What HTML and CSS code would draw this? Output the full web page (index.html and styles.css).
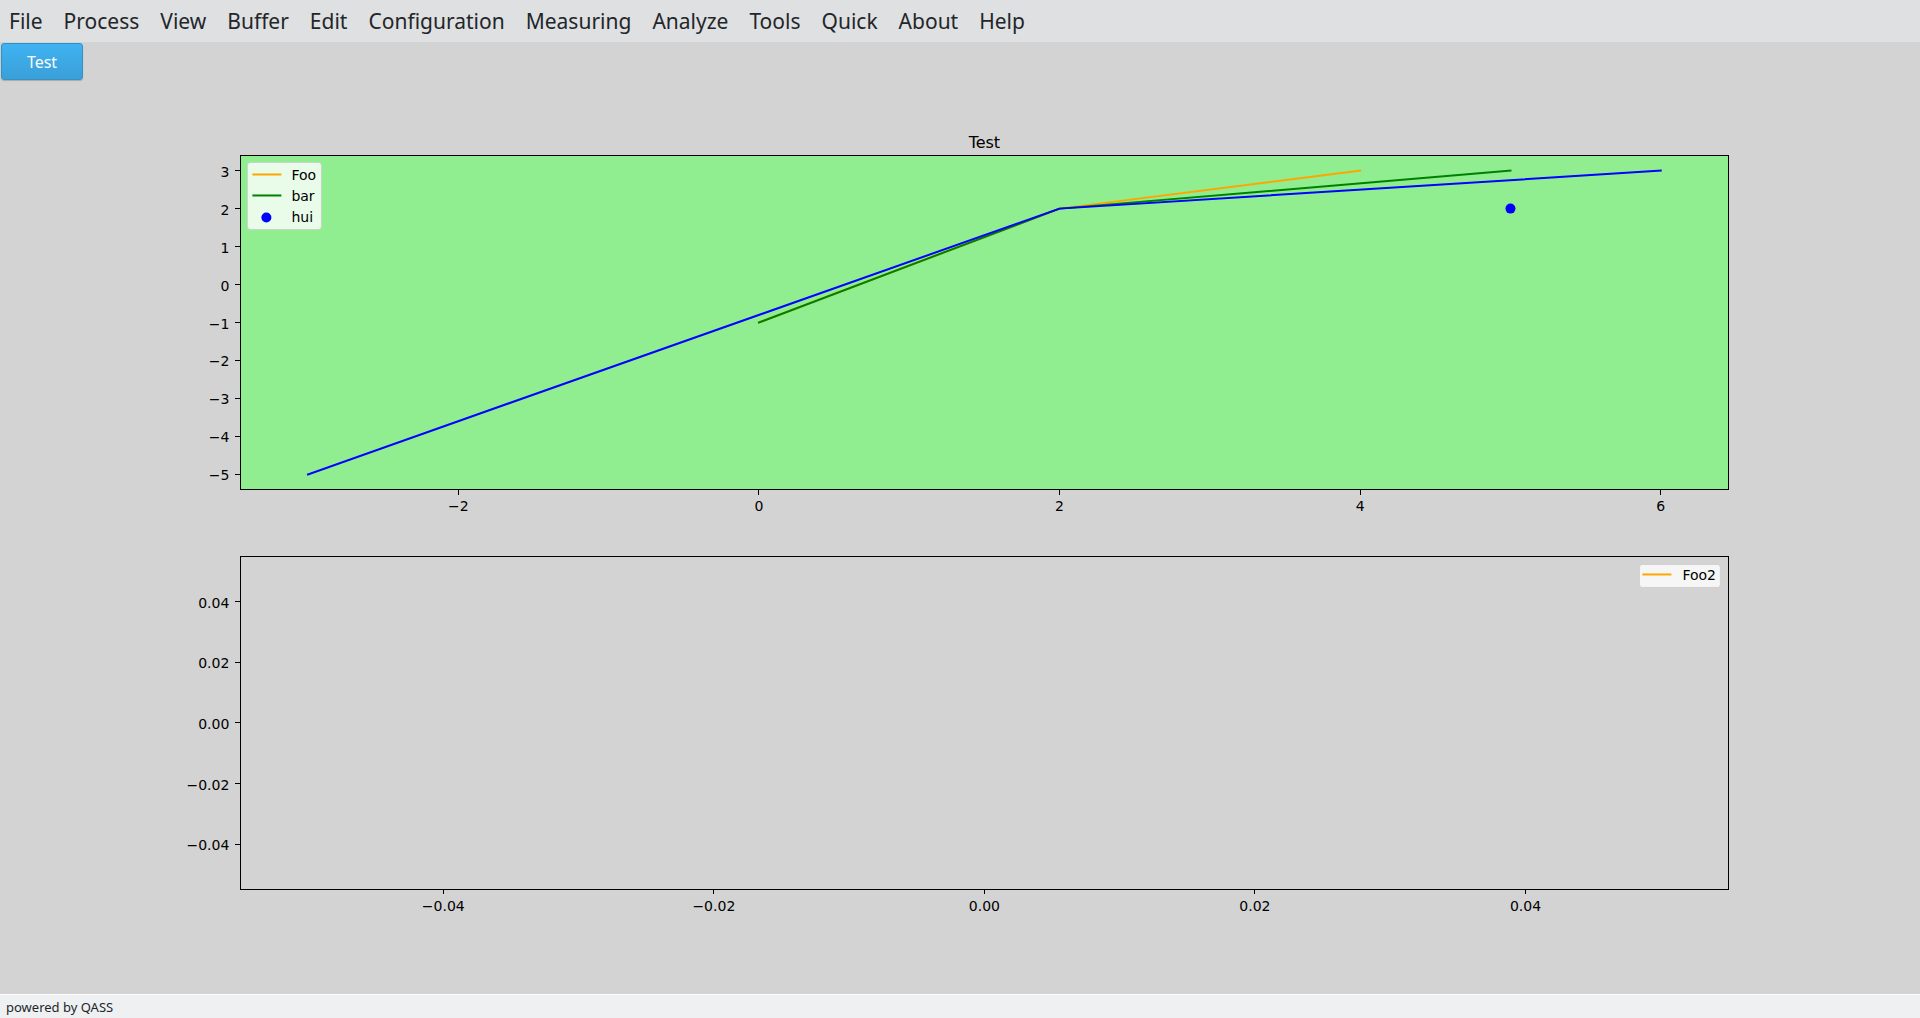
FILE: index.html
```html
<!DOCTYPE html>
<html lang="en">
<head>
<meta charset="utf-8">
<title>Test</title>
<link rel="stylesheet" href="styles.css">
</head>
<body>
<nav class="menubar">
  <button type="button">File</button>
  <button type="button">Process</button>
  <button type="button">View</button>
  <button type="button">Buffer</button>
  <button type="button">Edit</button>
  <button type="button">Configuration</button>
  <button type="button">Measuring</button>
  <button type="button">Analyze</button>
  <button type="button">Tools</button>
  <button type="button">Quick</button>
  <button type="button">About</button>
  <button type="button">Help</button>
</nav>
<main class="canvas">
  <svg class="figure" role="img" aria-label="Test plots">
    <!-- upper axes -->
    <svg class="axes" x="12.52%" y="11.92%" width="77.5%" height="35.09%">
      <rect class="frame frame-green" width="100%" height="100%"/>
      <svg x="50%"><text class="title" y="-7">Test</text></svg>

      <svg width="100%" height="100%" viewBox="-3.45 -3.4 9.9 8.8" preserveAspectRatio="none">
        <polyline class="series orange" points="0,1 2,-2 4,-3"/>
        <polyline class="series green" points="0,1 2,-2 5,-3"/>
        <polyline class="series blue" points="-3,5 2,-2 6,-3"/>
      </svg>
      <circle class="dot" cx="85.354%" cy="15.909%" r="5"/>

      <svg class="tick" x="14.646%" y="100%"><path d="M0 0V5"/><text class="xlabel" y="21">−2</text></svg>
      <svg class="tick" x="34.848%" y="100%"><path d="M0 0V5"/><text class="xlabel" y="21">0</text></svg>
      <svg class="tick" x="55.051%" y="100%"><path d="M0 0V5"/><text class="xlabel" y="21">2</text></svg>
      <svg class="tick" x="75.253%" y="100%"><path d="M0 0V5"/><text class="xlabel" y="21">4</text></svg>
      <svg class="tick" x="95.455%" y="100%"><path d="M0 0V5"/><text class="xlabel" y="21">6</text></svg>

      <svg class="tick" y="4.545%"><path d="M-5 0H0"/><text class="ylabel" x="-11" y="6">3</text></svg>
      <svg class="tick" y="15.909%"><path d="M-5 0H0"/><text class="ylabel" x="-11" y="6">2</text></svg>
      <svg class="tick" y="27.273%"><path d="M-5 0H0"/><text class="ylabel" x="-11" y="6">1</text></svg>
      <svg class="tick" y="38.636%"><path d="M-5 0H0"/><text class="ylabel" x="-11" y="6">0</text></svg>
      <svg class="tick" y="50%"><path d="M-5 0H0"/><text class="ylabel" x="-11" y="6">−1</text></svg>
      <svg class="tick" y="61.364%"><path d="M-5 0H0"/><text class="ylabel" x="-11" y="6">−2</text></svg>
      <svg class="tick" y="72.727%"><path d="M-5 0H0"/><text class="ylabel" x="-11" y="6">−3</text></svg>
      <svg class="tick" y="84.091%"><path d="M-5 0H0"/><text class="ylabel" x="-11" y="6">−4</text></svg>
      <svg class="tick" y="95.455%"><path d="M-5 0H0"/><text class="ylabel" x="-11" y="6">−5</text></svg>

      <g class="legend">
        <rect x="7" y="7" width="74" height="67" rx="3"/>
        <path class="series orange" d="M13 19H40"/>
        <path class="series green" d="M13 40H40"/>
        <circle class="dot" cx="26" cy="62" r="5"/>
        <text x="51" y="25">Foo</text>
        <text x="51" y="46">bar</text>
        <text x="51" y="67">hui</text>
      </g>
    </svg>

    <!-- lower axes -->
    <svg class="axes" x="12.52%" y="54.04%" width="77.5%" height="34.98%">
      <rect class="frame" width="100%" height="100%"/>

      <svg class="tick" x="13.636%" y="100%"><path d="M0 0V5"/><text class="xlabel" y="22">−0.04</text></svg>
      <svg class="tick" x="31.818%" y="100%"><path d="M0 0V5"/><text class="xlabel" y="22">−0.02</text></svg>
      <svg class="tick" x="50%" y="100%"><path d="M0 0V5"/><text class="xlabel" y="22">0.00</text></svg>
      <svg class="tick" x="68.182%" y="100%"><path d="M0 0V5"/><text class="xlabel" y="22">0.02</text></svg>
      <svg class="tick" x="86.364%" y="100%"><path d="M0 0V5"/><text class="xlabel" y="22">0.04</text></svg>

      <svg class="tick" y="13.636%"><path d="M-5 0H0"/><text class="ylabel" x="-11" y="6">0.04</text></svg>
      <svg class="tick" y="31.818%"><path d="M-5 0H0"/><text class="ylabel" x="-11" y="6">0.02</text></svg>
      <svg class="tick" y="50%"><path d="M-5 0H0"/><text class="ylabel" x="-11" y="6">0.00</text></svg>
      <svg class="tick" y="68.182%"><path d="M-5 0H0"/><text class="ylabel" x="-11" y="6">−0.02</text></svg>
      <svg class="tick" y="86.364%"><path d="M-5 0H0"/><text class="ylabel" x="-11" y="6">−0.04</text></svg>

      <svg class="legend" x="100%">
        <rect x="-89" y="8" width="81" height="23" rx="3"/>
        <path class="series orange" d="M-85 18H-58"/>
        <text x="-46" y="24">Foo2</text>
      </svg>
    </svg>
  </svg>
  <button class="tab" type="button">Test</button>
</main>
<footer class="statusbar">powered by QASS</footer>
</body>
</html>
```
FILE: styles.css
```css
body {
  margin: 0;
  min-height: 100vh;
  display: flex;
  flex-direction: column;
  background: #d3d3d3;
  font-family: "Noto Sans", sans-serif;
  color: #232629;
}

.menubar {
  display: flex;
  gap: 3px;
  height: 42px;
  background: #dee0e2;
}

.menubar button {
  padding: 0 9px;
  border: 0;
  background: none;
  font: 21px/42px "Noto Sans", sans-serif;
  color: inherit;
}

.canvas {
  position: relative;
  flex: 1;
  display: flex;
  min-height: 480px;
}

.figure {
  flex: 1;
  width: 100%;
}

.figure svg {
  overflow: visible;
}

.figure text {
  font: 14px "DejaVu Sans", sans-serif;
  fill: #000;
}

.figure .title {
  font-size: 16px;
  text-anchor: middle;
}

.frame {
  fill: none;
  stroke: #000;
  shape-rendering: crispEdges;
}

.frame-green {
  fill: #90ee90;
}

.series {
  fill: none;
  stroke-width: 2;
  stroke-linecap: square;
  stroke-linejoin: round;
  vector-effect: non-scaling-stroke;
}

.orange { stroke: #ffa500; }
.green { stroke: #008000; }
.blue { stroke: #0000ff; }

.dot {
  fill: #0000ff;
}

.tick path {
  stroke: #000;
  shape-rendering: crispEdges;
}

.figure .xlabel { text-anchor: middle; }
.figure .ylabel { text-anchor: end; }

.legend rect {
  fill: #fff;
  fill-opacity: 0.8;
  stroke: #ccc;
  stroke-opacity: 0.8;
}

.tab {
  position: absolute;
  top: 1px;
  left: 1px;
  width: 82px;
  height: 37px;
  padding: 0;
  border: 1px solid #3491c7;
  border-radius: 3px;
  background: linear-gradient(#3fb3f2, #3a9fd8);
  box-shadow: 0 1px 1px rgba(0, 0, 0, 0.2);
  font: 16px "Noto Sans", sans-serif;
  color: #fcfcfc;
}

.statusbar {
  height: 23px;
  padding-left: 6px;
  border-top: 1px solid #fff;
  background: #eff0f1;
  font-size: 13px;
  line-height: 25px;
}
```
